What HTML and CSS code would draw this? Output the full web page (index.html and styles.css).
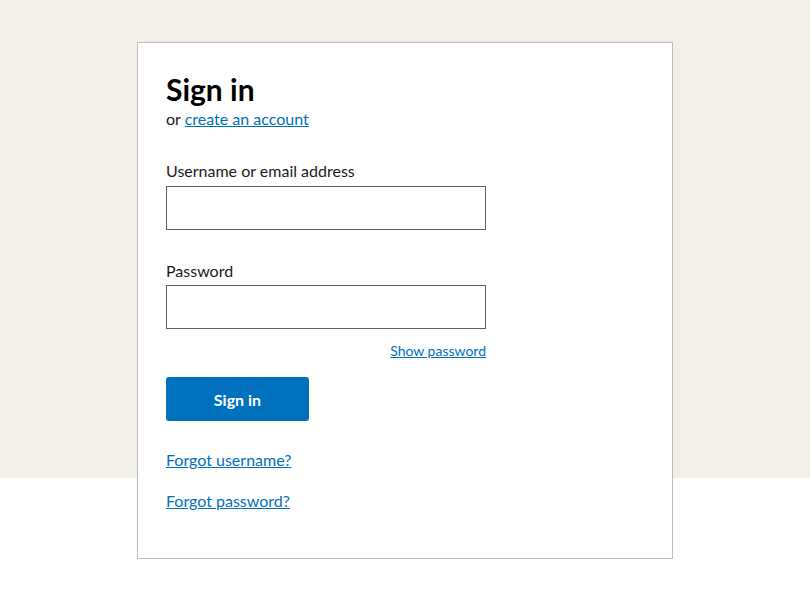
FILE: index.html
```html
<!DOCTYPE html>
<html lang="en">
<head>
<meta charset="utf-8">
<title>Sign in</title>
<link rel="stylesheet" href="styles.css">
</head>
<body>
<main class="page">
  <section class="card">
    <h1 class="title">Sign in</h1>
    <p class="sub">or <a href="#">create an account</a></p>
    <form class="form">
      <label class="label" for="user">Username or email address</label>
      <input class="input" id="user" type="text">
      <label class="label label-pw" for="pw">Password</label>
      <input class="input" id="pw" type="password">
      <div class="show-row"><a href="#" class="show">Show password</a></div>
      <button type="button" class="btn">Sign in</button>
      <a href="#" class="forgot">Forgot username?</a>
      <a href="#" class="forgot">Forgot password?</a>
    </form>
  </section>
</main>
</body>
</html>
```
FILE: styles.css
```css
* { box-sizing: border-box; }
html, body { margin: 0; padding: 0; }
body {
  font-family: Lato, "Open Sans", sans-serif;
  color: #1b1b1b;
  background: linear-gradient(#f2efe9 0, #f2efe9 478px, #fff 478px);
  min-height: 607px;
}
.page {
  padding-top: 42px;
  display: flex;
  justify-content: center;
}
.card {
  width: 536px;
  background: #fff;
  border: 1px solid #bdbdbd;
  padding: 28px 28px 47px 28px;
}
.title {
  margin: 0 0 2px 0;
  font-size: 30px;
  font-weight: 700;
  line-height: 36px;
  color: #000;
}
.sub {
  margin: 0;
  font-size: 16px;
  line-height: 20px;
}
a { color: #0071bc; }
.form {
  display: flex;
  flex-direction: column;
  align-items: flex-start;
  width: 320px;
  margin-top: 32px;
}
.label {
  font-size: 16px;
  line-height: 20px;
  margin-bottom: 5px;
}
.label-pw { margin-top: 31px; margin-bottom: 4px; }
.input {
  width: 320px;
  height: 44px;
  border: 1px solid #5b616b;
  margin: 0;
  font: inherit;
}
.show-row {
  align-self: stretch;
  text-align: right;
  margin-top: 14px;
  font-size: 14px;
  line-height: 16px;
}
.btn {
  margin-top: 18px;
  width: 143px;
  height: 44px;
  border: 0;
  border-radius: 3px;
  background: #0071bc;
  color: #fff;
  font-family: inherit;
  font-size: 16px;
  font-weight: 700;
}
.forgot {
  font-size: 16px;
  line-height: 20px;
  margin-top: 29px;
}
.forgot + .forgot { margin-top: 21px; }
```
